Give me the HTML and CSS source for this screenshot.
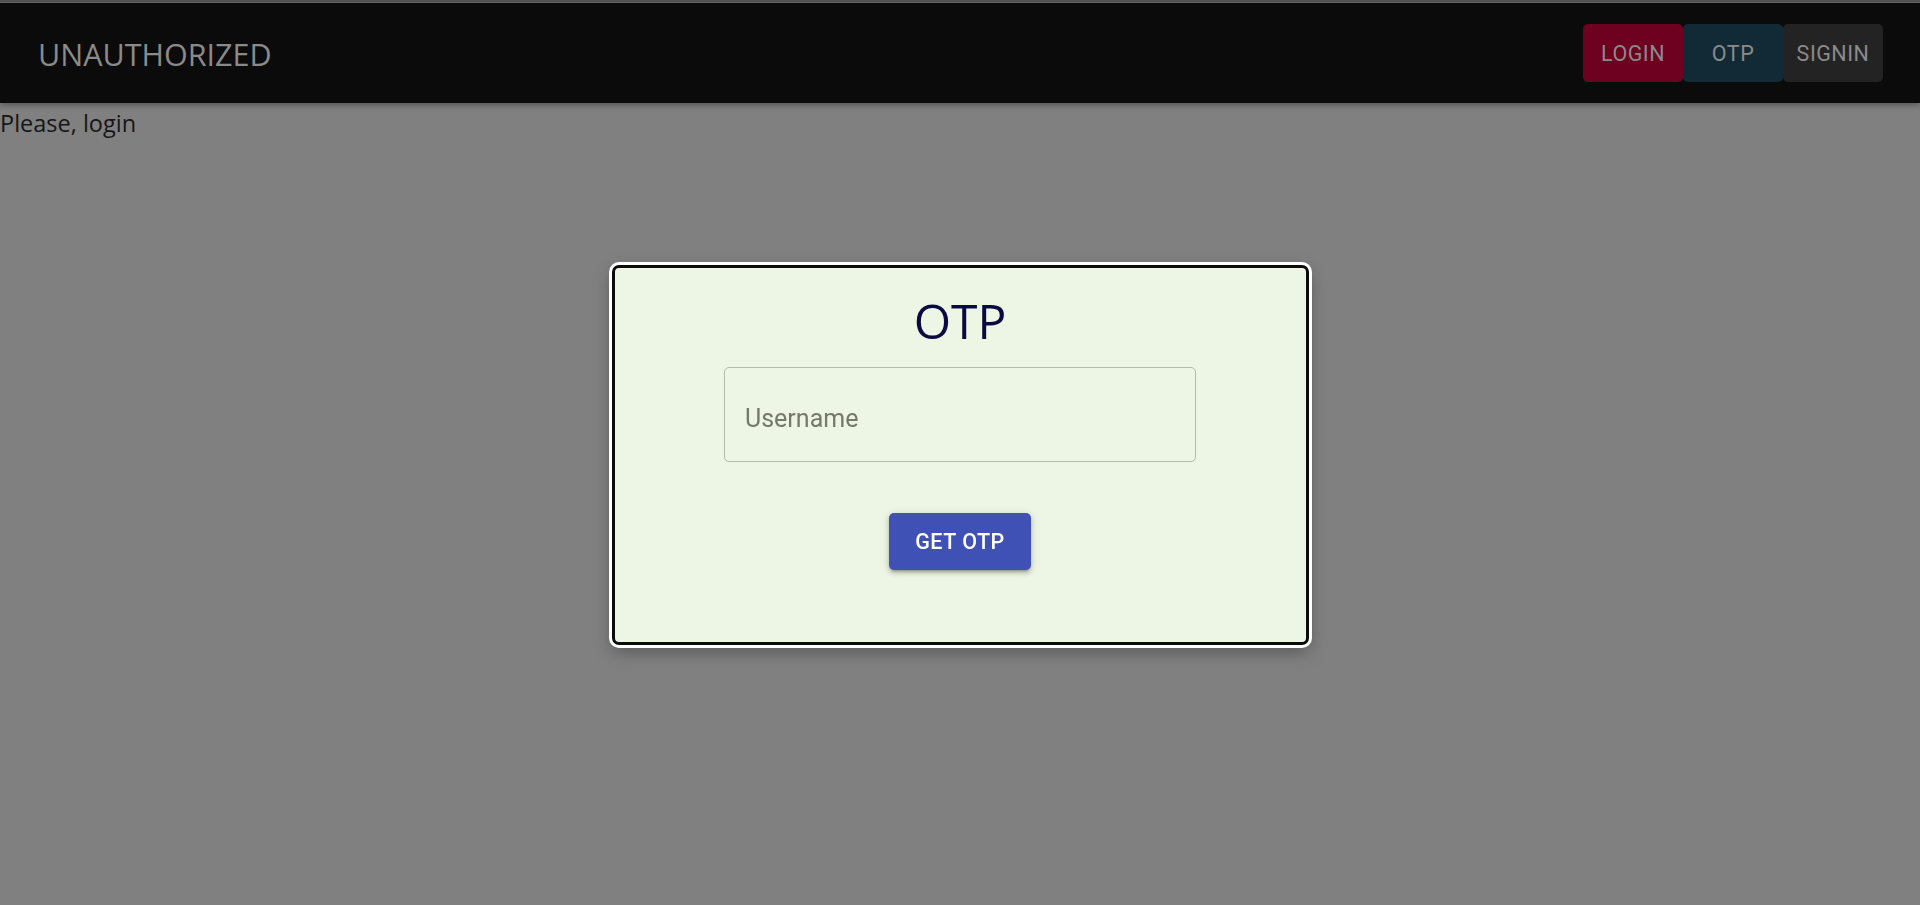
FILE: index.html
```html
<!DOCTYPE html>
<html lang="en">
<head>
<meta charset="utf-8">
<title>Unauthorized</title>
<link rel="stylesheet" href="styles.css">
</head>
<body>
  <div class="topline"></div>
  <header class="appbar">
    <div class="brand">UNAUTHORIZED</div>
    <nav class="nav">
      <a class="navbtn login">LOGIN</a>
      <a class="navbtn otp">OTP</a>
      <a class="navbtn signin">SIGNIN</a>
    </nav>
  </header>
  <main class="content">
    <p class="msg">Please, login</p>
  </main>
  <div class="overlay">
    <div class="dialog">
      <h1 class="dtitle">OTP</h1>
      <div class="field">
        <input class="input" type="text" placeholder="Username">
      </div>
      <button class="btn">GET OTP</button>
    </div>
  </div>
</body>
</html>
```
FILE: styles.css
```css
* { box-sizing: border-box; }
html, body { margin: 0; padding: 0; }
body {
  background: #808080;
  font-family: "Open Sans", "Noto Sans", sans-serif;
  height: 905px;
  overflow: hidden;
}
.topline {
  height: 3px;
  background: #555555;
  border-bottom: 1px solid #6a6a6a;
}
.appbar {
  height: 100px;
  background: #0b0b0b;
  display: flex;
  align-items: center;
  justify-content: space-between;
  padding: 0 37px 0 38px;
  box-shadow: 0 2px 6px rgba(0,0,0,0.35);
  position: relative;
}
.brand {
  color: #8a8a8a;
  font-size: 30.5px;
  font-weight: 400;
  padding-top: 2px;
}
.nav { display: flex; }
.navbtn {
  width: 100px;
  height: 58px;
  display: flex;
  align-items: center;
  justify-content: center;
  font-family: Roboto, sans-serif;
  font-size: 21.5px;
  letter-spacing: 0.5px;
  color: #8a8a8a;
  border-radius: 5px;
}
.login { background: #6e0020; }
.otp { background: #122a35; }
.signin { background: #232323; }
.content { padding: 0; }
.msg {
  margin: 0;
  padding-top: 2px;
  font-size: 23.5px;
  line-height: 36px;
  color: #161616;
}
.overlay {
  position: fixed;
  inset: 0;
  padding-top: 5px;
  display: flex;
  align-items: center;
  justify-content: center;
}
.dialog {
  width: 697px;
  height: 380px;
  background: #edf5e4;
  border: 3px solid #0b0b0b;
  border-radius: 7px;
  box-shadow: 0 0 0 3px #ffffff, 0 6px 18px rgba(0,0,0,0.35);
  display: flex;
  flex-direction: column;
  align-items: center;
  padding-top: 20px;
}
.dtitle {
  margin: 0;
  font-family: "Open Sans", sans-serif;
  font-weight: 400;
  font-size: 48px;
  line-height: 65px;
  color: #0a0a40;
}
.field {
  margin-top: 14px;
  width: 472px;
  height: 95px;
}
.input {
  width: 100%;
  height: 100%;
  border: 1px solid #b2baa9;
  border-radius: 5px;
  background: transparent;
  padding: 8px 20px 0;
  font-family: Roboto, sans-serif;
  font-size: 25px;
  color: #333;
  outline: none;
}
.input::placeholder { color: #737a6b; }
.btn {
  margin-top: 51px;
  width: 142px;
  height: 57px;
  border: none;
  border-radius: 5px;
  background: #3f51b5;
  color: #fff;
  font-family: Roboto, sans-serif;
  font-weight: 500;
  font-size: 21.5px;
  letter-spacing: 0.5px;
  box-shadow: 0 3px 3px -2px rgba(0,0,0,0.25), 0 3px 5px rgba(0,0,0,0.18), 0 1px 8px rgba(0,0,0,0.12);
  cursor: pointer;
}
```
